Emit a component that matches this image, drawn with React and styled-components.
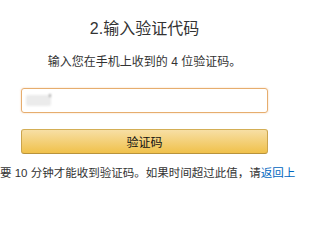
import React from 'react'
import styled, { createGlobalStyle } from 'styled-components'

//---------- styles ----------

const GlobalStyle = createGlobalStyle`
  body {
    margin: 0;
    background: #fff;
    font-family: "Liberation Sans", "Noto Sans CJK SC", sans-serif;
    color: #111;
  }
`

//page : bloc centré légèrement à gauche
const Page = styled.div`
  width: 296px;
  height: 222px;
  overflow: hidden;
  padding-top: 19px;
  box-sizing: border-box;
`

const Form = styled.div`
  width: 247px;
  margin-left: 21px;
  display: flex;
  flex-direction: column;
  align-items: stretch;
`

const Title = styled.h1`
  margin: 0;
  font-size: 16px;
  line-height: 20px;
  font-weight: 400;
  color: #333;
  text-align: center;
`

const Hint = styled.p`
  margin: 15px 0 0;
  font-size: 12px;
  line-height: 16px;
  color: #333;
  text-align: center;
`

//champ de saisie (état focus)
const Field = styled.div`
  margin-top: 18px;
  height: 25px;
  box-sizing: border-box;
  border: 1px solid #e6ad6e;
  border-radius: 3px;
  box-shadow: 0 0 2px rgba(228, 121, 17, 0.35);
  display: flex;
  align-items: center;
  padding-left: 4px;
`

//zone floutée dans le champ
const Blur = styled.span`
  position: relative;
  width: 25px;
  height: 11px;
  background: #ebebeb;
  filter: blur(1px);
  border-radius: 2px;

  &::after {
    content: '';
    position: absolute;
    right: 0;
    top: -1px;
    width: 2px;
    height: 3px;
    background: #aaa;
  }
`

const Button = styled.button`
  margin-top: 16px;
  height: 25px;
  box-sizing: border-box;
  border: 1px solid;
  border-color: #d3ae55 #cba44c #b8933c;
  border-radius: 3px;
  background: linear-gradient(to bottom, #f7dfa5, #f0c14b);
  font-family: inherit;
  font-size: 12px;
  color: #111;
  padding: 0;
  cursor: pointer;
`

//texte d'aide sur une seule ligne
const Note = styled.p`
  margin: 11px 0 0;
  font-size: 11.5px;
  line-height: 16px;
  color: #333;
  white-space: nowrap;
`

const Link = styled.a`
  color: #0066c0;
  text-decoration: none;
`

//---------- composant principal ----------

export default function App() {
  return (
    <Page>
      <GlobalStyle />
      <Form>
        <Title>2.输入验证代码</Title>
        <Hint>输入您在手机上收到的 4 位验证码。</Hint>
        <Field>
          <Blur />
        </Field>
        <Button>验证码</Button>
      </Form>
      <Note>
        要 10 分钟才能收到验证码。如果时间超过此值，请<Link href="#">返回上</Link>
      </Note>
    </Page>
  )
}
